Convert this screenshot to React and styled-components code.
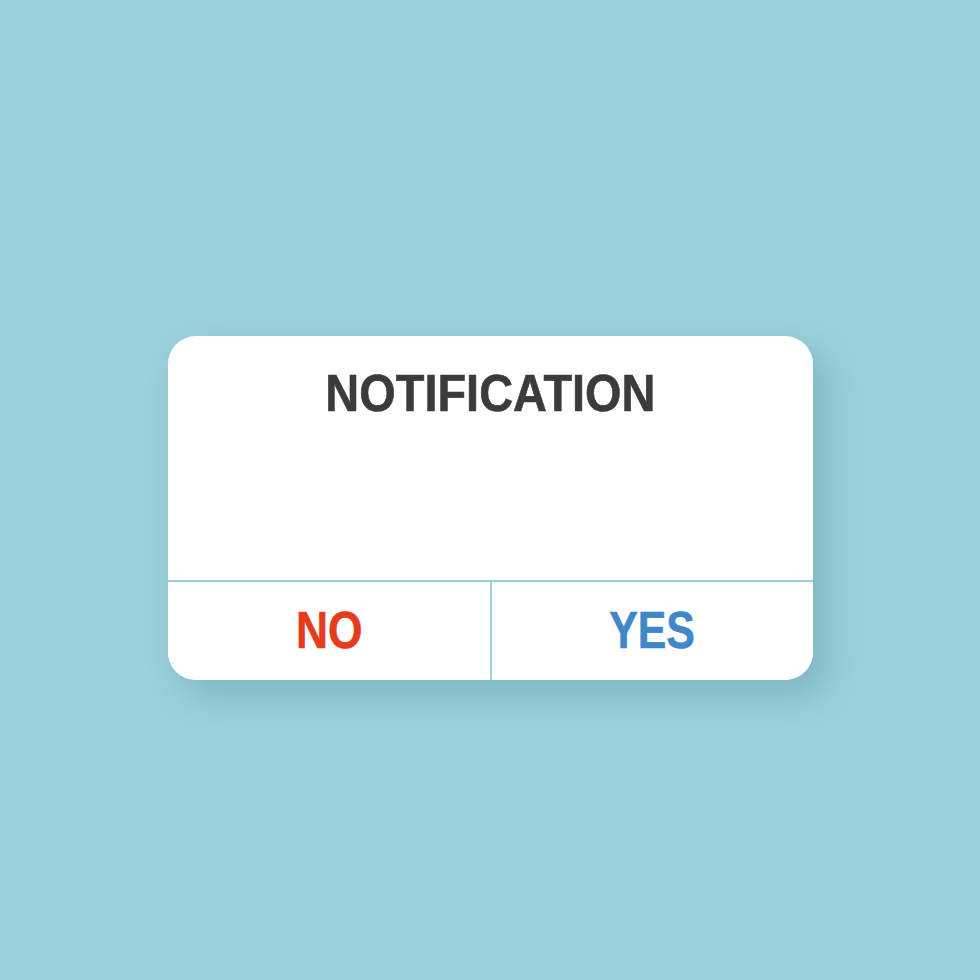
import React from 'react';
import styled, { createGlobalStyle } from 'styled-components';

const GlobalStyle = createGlobalStyle`
    html, body {
        margin: 0;
        padding: 0;
        background: #9bd0da;
    }
`;

const Page = styled.div`
    width: 980px;
    height: 980px;
    display: flex;
    flex-direction: column;
    align-items: center;
    padding-top: 336px;
    box-sizing: border-box;
    background: #9bd0da;
`;

const Dialog = styled.div`
    width: 645px;
    height: 344px;
    background: #ffffff;
    border-radius: 28px;
    box-shadow: 14px 16px 34px rgba(50, 115, 130, 0.28);
    display: flex;
    flex-direction: column;
    overflow: hidden;
`;

const Body = styled.div`
    flex: 1;
    display: flex;
    justify-content: center;
    padding-top: 30px;
`;

// condensed heavy lettering, narrowed from a regular bold face
const Label = styled.span`
    display: inline-block;
    font-family: "Liberation Sans", Arial, sans-serif;
    font-weight: 700;
    font-size: 51px;
    line-height: 56px;
    -webkit-text-stroke: 0.6px currentColor;
    transform: scaleX(${props => props.squeeze || 0.88});
    transform-origin: center;
`;

const Title = styled.h2`
    margin: 0;
    color: #3b3b3b;
`;

const Actions = styled.div`
    height: 98px;
    display: grid;
    grid-template-columns: 1fr 1fr;
    border-top: 2px solid #9bd0da;
`;

const Action = styled.button`
    border: none;
    background: #ffffff;
    margin: 0;
    padding: 0;
    display: flex;
    align-items: center;
    justify-content: center;
    color: ${props => props.tone};
    cursor: pointer;

    & + & {
        border-left: 2px solid #9bd0da;
    }
`;

export default function App() {
    return (
        <>
            <GlobalStyle />
            <Page>
                <Dialog>
                    <Body>
                        <Title><Label squeeze={0.92}>NOTIFICATION</Label></Title>
                    </Body>
                    <Actions>
                        <Action tone="#e63c1e"><Label squeeze={0.87}>NO</Label></Action>
                        <Action tone="#3f87c9"><Label squeeze={0.84}>YES</Label></Action>
                    </Actions>
                </Dialog>
            </Page>
        </>
    );
}
